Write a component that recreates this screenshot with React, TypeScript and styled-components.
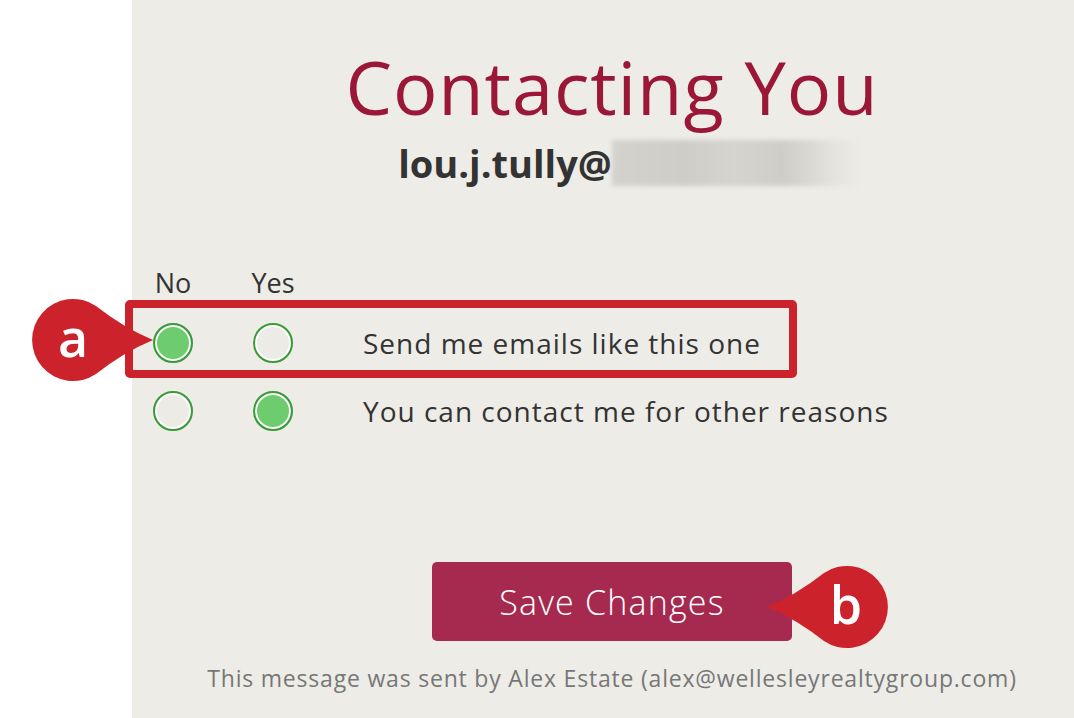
import styled, { createGlobalStyle } from "styled-components";

const GlobalStyle = createGlobalStyle`
  html, body {
    margin: 0;
    padding: 0;
    background: #ffffff;
  }
  body {
    font-family: "Open Sans", "Lato", sans-serif;
    color: #333333;
  }
`;

const Page = styled.div`
  display: flex;
  width: 1074px;
  height: 718px;
  overflow: hidden;
`;

const Gutter = styled.div`
  width: 132px;
  flex-shrink: 0;
  background: #ffffff;
`;

const Panel = styled.main`
  flex: 1;
  background: #edece7;
  display: flex;
  flex-direction: column;
  padding: 0 0 0 18px;
`;

const Title = styled.h1`
  margin: 44px 0 0;
  text-align: center;
  font-weight: 400;
  font-size: 74px;
  line-height: 86px;
  letter-spacing: 0.9px;
  color: #9b1738;
`;

const EmailRow = styled.div`
  display: flex;
  justify-content: center;
  align-items: center;
  margin-top: 8px;
  height: 50px;
  padding-left: 30px;
`;

const EmailText = styled.span`
  font-weight: 700;
  font-size: 38px;
  color: #333333;
`;

const Redacted = styled.span`
  display: block;
  width: 244px;
  height: 46px;
  background: linear-gradient(
    90deg,
    #d4d2cd 0%,
    #cfcdc8 30%,
    #d6d4cf 50%,
    #cfcdc8 70%,
    #e4e2dd 90%,
    #ebeae5 100%
  );
  filter: blur(2px);
`;

const Options = styled.section`
  position: relative;
  margin: 80px 0 0 3px;
  display: grid;
  grid-template-columns: 40px 40px auto;
  column-gap: 60px;
  align-items: center;
`;

const Header = styled.div`
  font-size: 27px;
  line-height: 30px;
  text-align: center;
  color: #333333;
  white-space: nowrap;
  justify-self: center;
  margin-bottom: 11px;
`;

const Row = styled.div`
  display: contents;
`;

const Radio = styled.span<{ $checked?: boolean }>`
  box-sizing: border-box;
  width: 40px;
  height: 40px;
  border-radius: 50%;
  border: 2px solid #389a38;
  box-shadow: inset 0 0 0 2px #ffffff;
  background: ${(p) => (p.$checked ? "#6dcc6d" : "#ecebe6")};
  margin: 14px 0;
`;

const Label = styled.span`
  font-size: 28px;
  letter-spacing: 1px;
  color: #333333;
  margin-left: 10px;
  white-space: nowrap;
`;

const Highlight = styled.div`
  position: absolute;
  left: -28px;
  top: 32px;
  width: 672px;
  height: 78px;
  box-sizing: border-box;
  border: 8px solid #cc222b;
  border-radius: 5px;
  pointer-events: none;
`;

const CalloutWrap = styled.div<{ $left: number; $top: number }>`
  position: absolute;
  left: ${(p) => p.$left}px;
  top: ${(p) => p.$top}px;
  width: 128px;
  height: 84px;
`;

const CalloutLetter = styled.span<{ $cx: number }>`
  position: absolute;
  top: 0;
  left: ${(p) => p.$cx - 40}px;
  width: 80px;
  height: 84px;
  display: flex;
  align-items: center;
  justify-content: center;
  color: #ffffff;
  font-family: "Open Sans", "Lato", sans-serif;
  font-weight: 600;
  font-size: 52px;
  line-height: 1;
  padding-bottom: 6px;
  box-sizing: border-box;
`;

const Callout = ({
  letter,
  pointing,
  left,
  top,
}: {
  letter: string;
  pointing: "left" | "right";
  left: number;
  top: number;
}) => {
  const right = pointing === "right";
  const cx = right ? 47 : 80;
  const path = right
    ? "M127 42 Q98 30 70 8 A41 41 0 1 0 70 76 Q98 54 127 42 Z"
    : "M1 42 Q30 30 58 8 A41 41 0 1 1 58 76 Q30 54 1 42 Z";
  return (
    <CalloutWrap $left={left} $top={top}>
      <svg width="128" height="84" viewBox="0 0 128 84">
        <path d={path} fill="#cc222b" />
      </svg>
      <CalloutLetter $cx={cx}>{letter}</CalloutLetter>
    </CalloutWrap>
  );
};

const Actions = styled.div`
  display: flex;
  justify-content: center;
  margin-top: 117px;
`;

const ButtonHolder = styled.div`
  position: relative;
`;

const SaveButton = styled.button`
  width: 360px;
  height: 79px;
  border: none;
  border-radius: 5px;
  background: #a62a4f;
  color: #ffffff;
  font-family: "Open Sans", "Lato", sans-serif;
  font-size: 34px;
  font-weight: 300;
  letter-spacing: 1.2px;
  cursor: pointer;
`;

const Footer = styled.p`
  margin: 21px 0 0;
  text-align: center;
  font-size: 23px;
  letter-spacing: 0.8px;
  color: #777777;
`;

const rows = [
  { label: "Send me emails like this one", value: "no" },
  { label: "You can contact me for other reasons", value: "yes" },
];

export default function App() {
  return (
    <>
      <GlobalStyle />
      <Page>
        <Gutter />
        <Panel>
          <Title>Contacting You</Title>
          <EmailRow>
            <EmailText>lou.j.tully@</EmailText>
            <Redacted />
          </EmailRow>
          <Options>
            <Header>No</Header>
            <Header>Yes</Header>
            <span />
            {rows.map((r) => (
              <Row key={r.label}>
                <Radio $checked={r.value === "no"} />
                <Radio $checked={r.value === "yes"} />
                <Label>{r.label}</Label>
              </Row>
            ))}
            <Highlight>
              <Callout letter="a" pointing="right" left={-107} top={-10} />
            </Highlight>
          </Options>
          <Actions>
            <ButtonHolder>
              <SaveButton>Save Changes</SaveButton>
              <Callout letter="b" pointing="left" left={334} top={3} />
            </ButtonHolder>
          </Actions>
          <Footer>
            This message was sent by Alex Estate (alex@wellesleyrealtygroup.com)
          </Footer>
        </Panel>
      </Page>
    </>
  );
}
